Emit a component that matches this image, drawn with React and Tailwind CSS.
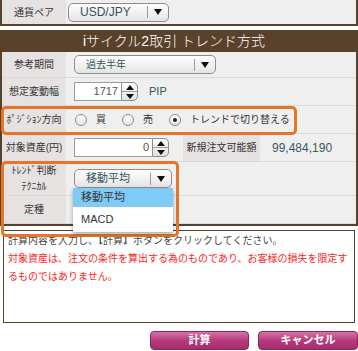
import React from "react";

const Arrow = () => (
  <span className="w-0 h-0 border-x-[4px] border-x-transparent border-t-[6px] border-t-[#111]" />
);

const Select = ({ value, className }) => (
  <div
    className={`h-[19px] flex items-center rounded-[5px] border border-[#8d8d8d] bg-gradient-to-b from-white to-[#e4e4e4] text-[#35525c] ${className}`}
  >
    <span className="flex-1 pl-[11px] leading-none">{value}</span>
    <span className="h-[12px] border-l border-[#9a9a9a]" />
    <span className="w-[20px] flex items-center justify-center">
      <Arrow />
    </span>
  </div>
);

const Spinner = () => (
  <div className="w-[17px] h-[19px] flex flex-col rounded-r-[5px] border border-[#8d8d8d] bg-gradient-to-b from-white to-[#e2e2e2]">
    <div className="flex-1 flex items-center justify-center border-b border-[#9a9a9a]">
      <span className="w-0 h-0 border-x-[4px] border-x-transparent border-b-[5px] border-b-[#111]" />
    </div>
    <div className="flex-1 flex items-center justify-center">
      <span className="w-0 h-0 border-x-[4px] border-x-transparent border-t-[5px] border-t-[#111]" />
    </div>
  </div>
);

const NumInput = ({ value, width }) => (
  <div className="flex items-center">
    <div
      className={`h-[19px] ${width} bg-white border border-[#9a9a9a] border-r-0 flex items-center justify-end pr-[3px] text-[11px] text-[#555]`}
    >
      {value}
    </div>
    <Spinner />
  </div>
);

const Radio = ({ checked, label }) => (
  <div className="flex items-center gap-[9px]">
    <span className="w-[12px] h-[12px] rounded-full border border-[#8a8a8a] bg-gradient-to-b from-white to-[#e6e6e6] flex items-center justify-center">
      {checked && <span className="w-[4px] h-[4px] rounded-full bg-[#222]" />}
    </span>
    <span>{label}</span>
  </div>
);

const Row = ({ label, height, children }) => (
  <div className={`flex ${height} border-b border-[#dadada]`}>
    <div className="w-[64px] bg-[#e6e2e2] flex flex-col items-center justify-center text-[10px] text-[#333] leading-[16px]">
      {label}
    </div>
    <div className="flex-1 flex items-center pl-[8px] text-[#333]">{children}</div>
  </div>
);

export default function App() {
  return (
    <div className="relative w-[358px] h-[351px] bg-white overflow-hidden font-['Liberation_Sans','Noto_Sans_CJK_JP',sans-serif]">
      {/* currency pair */}
      <div className="h-[26px] flex border-x-2 border-b-2 border-[#56412c] bg-[#efefef]">
        <div className="w-[64px] bg-[#e6e2e2] flex items-center justify-center text-[10px] text-[#333]">
          通貨ペア
        </div>
        <div className="flex items-center pl-[2px]">
          <Select value="USD/JPY" className="w-[101px] text-[12px]" />
        </div>
      </div>

      {/* main frame */}
      <div className="mt-[4px] border-x-2 border-b-2 border-[#56412c] bg-[#efefef]">
        <div className="h-[22px] -mx-[2px] bg-[#5a412c] text-white text-[14px] font-light flex items-center justify-center pr-[10px]">
          iサイクル2取引 トレンド方式
        </div>
        <Row label="参考期間" height="h-[26px]">
          <Select value="過去半年" className="w-[142px] text-[10px]" />
        </Row>
        <Row label="想定変動幅" height="h-[28px]">
          <NumInput value="1717" width="w-[47px]" />
          <span className="ml-[11px] text-[11px] text-[#35525c]">PIP</span>
        </Row>
        <Row label="ﾎﾟｼﾞｼｮﾝ方向" height="h-[28px]">
          <div className="flex items-center gap-[16px] text-[10px] pl-[1px]">
            <Radio label="買" />
            <Radio label="売" />
            <Radio checked label="トレンドで切り替える" />
          </div>
        </Row>
        <div className="flex h-[28px] border-b border-[#dadada]">
          <div className="w-[64px] bg-[#e6e2e2] flex items-center justify-center text-[10px] text-[#333]">
            対象資産(円)
          </div>
          <div className="w-[117px] flex items-center pl-[8px]">
            <NumInput value="0" width="w-[78px]" />
          </div>
          <div className="w-[77px] bg-[#e6e2e2] flex items-center justify-center text-[10px] text-[#333]">
            新規注文可能額
          </div>
          <div className="flex-1 flex items-center pl-[12px] text-[12px] text-[#3d5862]">
            99,484,190
          </div>
        </div>
        <Row
          label={
            <>
              <span>ﾄﾚﾝﾄﾞ判断</span>
              <span>ﾃｸﾆｶﾙ</span>
            </>
          }
          height="h-[34px]"
        >
          <Select value="移動平均" className="w-[98px] text-[11px]" />
        </Row>
        <Row label="定種" height="h-[28px]" />
      </div>

      {/* message box */}
      <div className="mx-[3px] mt-[4px] h-[93px] border border-[#56412c] bg-white px-[4px] pt-[1px] text-[10px] leading-[18px]">
        <div className="text-[#444]">計算内容を入力し、【計算】ボタンをクリックしてください。</div>
        <div className="text-[#ff2323]">
          対象資産は、注文の条件を算出する為のものであり、お客様の損失を限定するものではありません。
        </div>
      </div>

      {/* buttons */}
      <div className="flex justify-end gap-[9px] mt-[8px]">
        <button className="w-[99px] h-[19px] rounded-[4px] border border-[#8e2560] bg-gradient-to-b from-[#d672a8] via-[#b63b7b] to-[#a52d6d] text-white text-[11px] font-bold">
          計算
        </button>
        <button className="w-[100px] h-[19px] rounded-[4px] border border-[#8e2560] bg-gradient-to-b from-[#d672a8] via-[#b63b7b] to-[#a52d6d] text-white text-[11px] font-bold">
          キャンセル
        </button>
      </div>

      {/* highlight frames */}
      <div className="absolute left-[1px] top-[106px] w-[296px] h-[29px] border-[3px] border-[#e8742a] rounded-[5px]" />
      <div className="absolute left-[1px] top-[161px] w-[178px] h-[76px] border-[3px] border-[#e8742a] rounded-[5px]" />

      {/* open dropdown */}
      <div className="absolute left-[73px] top-[188px] w-[100px] bg-white shadow-[0_2px_4px_rgba(0,0,0,0.35)] text-[11px]">
        <div className="h-[19px] bg-[#7fcbf6] flex items-center pl-[8px] text-[#333]">移動平均</div>
        <div className="h-[25px] flex items-center pl-[8px] text-[#333]">MACD</div>
      </div>
    </div>
  );
}
